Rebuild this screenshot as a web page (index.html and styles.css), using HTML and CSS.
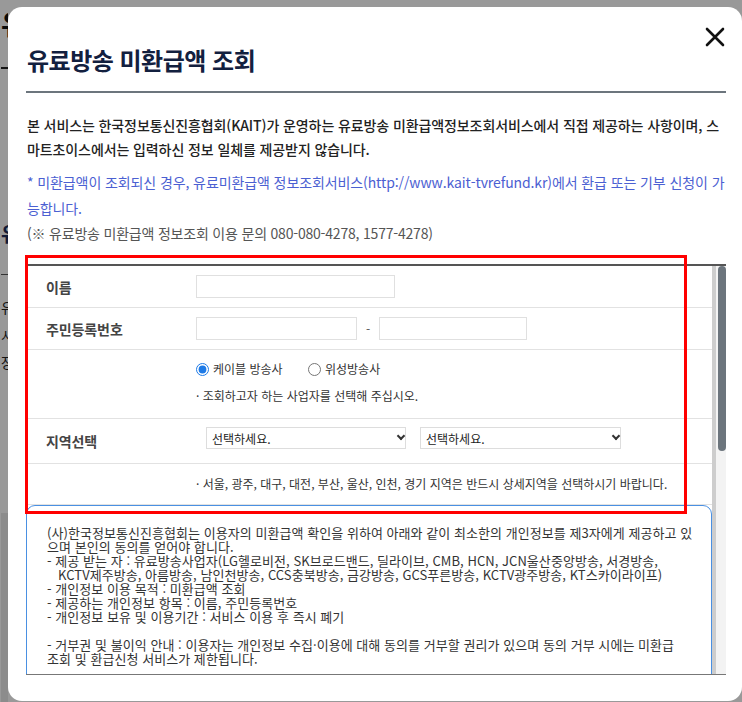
FILE: index.html
```html
<!DOCTYPE html>
<html lang="ko">
<head>
<meta charset="utf-8">
<title>유료방송 미환급액 조회</title>
<link rel="stylesheet" href="styles.css">
</head>
<body>
<div class="page">
  <h1 class="page-title">유</h1>
  <div class="page-rule"></div>
  <h2 class="page-sub">유</h2>
  <div class="page-rule thin"></div>
  <ul class="page-list">
    <li>유</li>
    <li>시</li>
    <li>장</li>
  </ul>
  <div class="page-foot"></div>
</div>
<div class="dim"></div>

<div class="modal">
  <div class="modal-head">
    <h2 class="modal-title">유료방송 미환급액 조회</h2>
    <button class="close" type="button" aria-label="닫기">
      <svg viewBox="0 0 20 20" width="20" height="20"><path d="M2 2L18 18M18 2L2 18" stroke="#111" stroke-width="2.6" stroke-linecap="round" fill="none"/></svg>
    </button>
  </div>

  <p class="intro">본 서비스는 한국정보통신진흥협회(KAIT)가 운영하는 유료방송 미환급액정보조회서비스에서 직접 제공하는 사항이며, 스마트초이스에서는 입력하신 정보 일체를 제공받지 않습니다.</p>
  <p class="note">* 미환급액이 조회되신 경우, 유료미환급액 정보조회서비스(http://www.kait-tvrefund.kr)에서 환급 또는 기부 신청이 가능합니다.</p>
  <p class="contact">(※ 유료방송 미환급액 정보조회 이용 문의 080-080-4278, 1577-4278)</p>

  <div class="scroll">
    <div class="scroll-body">
      <div class="row">
        <div class="label">이름</div>
        <div class="value"><input class="inp w-name" type="text"></div>
      </div>
      <div class="row">
        <div class="label">주민등록번호</div>
        <div class="value"><input class="inp w-ssn1" type="text"><span class="dash">-</span><input class="inp w-ssn2" type="password"></div>
      </div>
      <div class="row">
        <div class="label"></div>
        <div class="value radio-cell">
          <div class="radios">
            <label class="opt opt-first"><input type="radio" name="kind" checked>케이블 방송사</label>
            <label class="opt"><input type="radio" name="kind">위성방송사</label>
          </div>
          <div class="hint">· 조회하고자 하는 사업자를 선택해 주십시오.</div>
        </div>
      </div>
      <div class="row">
        <div class="label">지역선택</div>
        <div class="value region-cell">
          <span class="sel sel-1"><select><option>선택하세요.</option></select></span>
          <span class="sel sel-2"><select><option>선택하세요.</option></select></span>
        </div>
      </div>
      <div class="row">
        <div class="label"></div>
        <div class="value notice-cell">· 서울, 광주, 대구, 대전, 부산, 울산, 인천, 경기 지역은 반드시 상세지역을 선택하시기 바랍니다.</div>
      </div>
      <textarea class="terms" readonly>(사)한국정보통신진흥협회는 이용자의 미환급액 확인을 위하여 아래와 같이 최소한의 개인정보를 제3자에게 제공하고 있
으며 본인의 동의를 얻어야 합니다.
- 제공 받는 자 : 유료방송사업자(LG헬로비전, SK브로드밴드, 딜라이브, CMB, HCN, JCN울산중앙방송, 서경방송,
   KCTV제주방송, 아름방송, 남인천방송, CCS충북방송, 금강방송, GCS푸른방송, KCTV광주방송, KT스카이라이프)
- 개인정보 이용 목적 : 미환급액 조회
- 제공하는 개인정보 항목 : 이름, 주민등록번호
- 개인정보 보유 및 이용기간 : 서비스 이용 후 즉시 폐기

- 거부권 및 불이익 안내 : 이용자는 개인정보 수집·이용에 대해 동의를 거부할 권리가 있으며 동의 거부 시에는 미환급
조회 및 환급신청 서비스가 제한됩니다.</textarea>
    </div>
    <div class="scrollbar"><div class="thumb"></div></div>
  </div>

  <div class="highlight"></div>
</div>
</body>
</html>
```

FILE: styles.css
```css
html, body {
  height: 100%;
  margin: 0;
  overflow: hidden;
}

body {
  background: #ffffff;
  font-family: "Noto Sans CJK KR", "Noto Sans", sans-serif;
}

/* page behind the dialog (only its left edge shows) */
.page {
  width: 8px;
  height: 100%;
  overflow: hidden;
  padding: 6px 0 0 1px;
  box-sizing: border-box;
  color: #111;
}

.page-title {
  margin: 0;
  font-size: 28px;
  line-height: 34px;
  font-weight: 700;
  white-space: nowrap;
}

.page-rule {
  width: 100px;
  height: 2px;
  background: #222;
  margin-top: 27px;
}

.page-rule.thin {
  height: 1px;
  background: #555;
  margin-top: 26px;
}

.page-sub {
  margin: 151px 0 0;
  font-size: 20px;
  line-height: 28px;
  font-weight: 700;
  color: #1d2c5a;
  white-space: nowrap;
}

.page-list {
  list-style: none;
  margin: 19px 0 0;
  padding: 0;
  font-size: 14px;
  line-height: 27.5px;
  color: #222;
  white-space: nowrap;
}

.page-foot {
  width: 100px;
  margin-top: 136px;
  height: 300px;
  background: #e9e9e9;
}

.dim {
  position: fixed;
  inset: 0;
  background: rgba(0, 0, 0, 0.4);
}

/* dialog */
.modal {
  position: fixed;
  left: 8px;
  top: 7px;
  width: 734px;
  height: 694px;
  box-sizing: border-box;
  padding: 20px 16px 0 18px;
  background: #fff;
  border-radius: 14px;
  font-family: "Noto Sans CJK KR", "Noto Sans", sans-serif;
}

.modal-head {
  display: flex;
  justify-content: space-between;
  align-items: flex-start;
  border-bottom: 2px solid #6c757d;
  padding-bottom: 15px;
}

.modal-title {
  margin: 17px 0 0 1px;
  font-size: 24px;
  line-height: 32px;
  font-weight: 700;
  letter-spacing: -0.5px;
  color: #13203f;
}

.close {
  width: 20px;
  height: 20px;
  margin: 0 1px 0 0;
  padding: 0;
  border: 0;
  background: none;
  display: block;
  cursor: pointer;
}

.close svg {
  display: block;
}

.intro {
  margin: 20px 0 0 1px;
  font-size: 14px;
  line-height: 24px;
  letter-spacing: -0.1px;
  font-weight: 500;
  color: #222;
}

.note {
  margin: 8px 0 0 1px;
  font-size: 14px;
  line-height: 26px;
  letter-spacing: -0.1px;
  color: #4b60d2;
}

.contact {
  margin: 0 0 0 1px;
  font-size: 14px;
  line-height: 24px;
  letter-spacing: -0.2px;
  color: #555;
}

/* scrolling form */
.scroll {
  display: flex;
  margin-top: 19px;
  height: 411px;
  box-sizing: border-box;
  border-top: 2px solid #555;
  border-bottom: 1px solid #777;
}

.scroll-body {
  flex: 1;
  min-width: 0;
  overflow: hidden;
}

.scrollbar {
  flex: none;
  width: 14px;
  background: linear-gradient(90deg, #cdcdcd 0 4px, #f3f3f3 4px);
}

.thumb {
  margin-left: 6px;
  height: 185px;
  background: #6c757d;
  border-radius: 4px;
}

.row {
  display: grid;
  grid-template-columns: 160px 1fr;
  border-bottom: 1px solid #e2e2e2;
}

.label {
  display: flex;
  align-items: center;
  padding-left: 20px;
  font-size: 14px;
  font-weight: 700;
  color: #444;
  letter-spacing: -0.1px;
}

.value {
  padding: 9px 0 9px 10px;
  font-size: 12px;
  line-height: 18px;
  color: #333;
  display: flex;
  align-items: center;
}

.inp {
  height: 23px;
  box-sizing: border-box;
  border: 1px solid #e0e0e0;
  margin: 0;
  padding: 0 4px;
  font: inherit;
  display: block;
}

.w-name { width: 199px; }
.w-ssn1 { width: 161px; }
.w-ssn2 { width: 148px; }

.dash {
  width: 22px;
  text-align: center;
  color: #555;
}

.radio-cell {
  display: block;
  padding: 10px 0 13px 10px;
}

.radios {
  display: flex;
  align-items: center;
  height: 18px;
}

.opt {
  display: inline-flex;
  align-items: center;
}

.opt-first {
  width: 112px;
}

.opt input {
  width: 13px;
  height: 13px;
  margin: 0 4px 0 0;
  accent-color: #1e7ae6;
}

.hint {
  margin-top: 9px;
}

.region-cell {
  padding: 8px 0 14px 20px;
}

.sel {
  position: relative;
  display: block;
}

.sel-1 select { width: 200px; }
.sel-2 { margin-left: 14px; }
.sel-2 select { width: 201px; }

.sel select {
  appearance: none;
  -webkit-appearance: none;
  display: block;
  height: 22px;
  box-sizing: border-box;
  border: 1px solid #ddd;
  border-radius: 0;
  background: #fff;
  padding: 0 0 0 5px;
  font: 12px "Noto Sans CJK KR", sans-serif;
  color: #222;
}

.sel::after {
  content: "";
  position: absolute;
  right: 2px;
  top: 6px;
  width: 4px;
  height: 4px;
  border-right: 2px solid #333;
  border-bottom: 2px solid #333;
  transform: rotate(45deg);
}

.notice-cell {
  padding: 11px 0 11px 10px;
}

.terms {
  display: block;
  width: 100%;
  height: 300px;
  box-sizing: border-box;
  margin: 0;
  border: 1px solid #4a90e2;
  border-radius: 9px 9px 0 0;
  padding: 20px 10px 0 20px;
  font: 13px/14px "Noto Sans CJK KR", sans-serif;
  letter-spacing: 0.05px;
  color: #333;
  white-space: pre;
  overflow: hidden;
  resize: none;
  outline: none;
}

.highlight {
  position: absolute;
  left: 17px;
  top: 248px;
  width: 662px;
  height: 259px;
  box-sizing: border-box;
  border: 3px solid #ff0000;
  pointer-events: none;
}
```
